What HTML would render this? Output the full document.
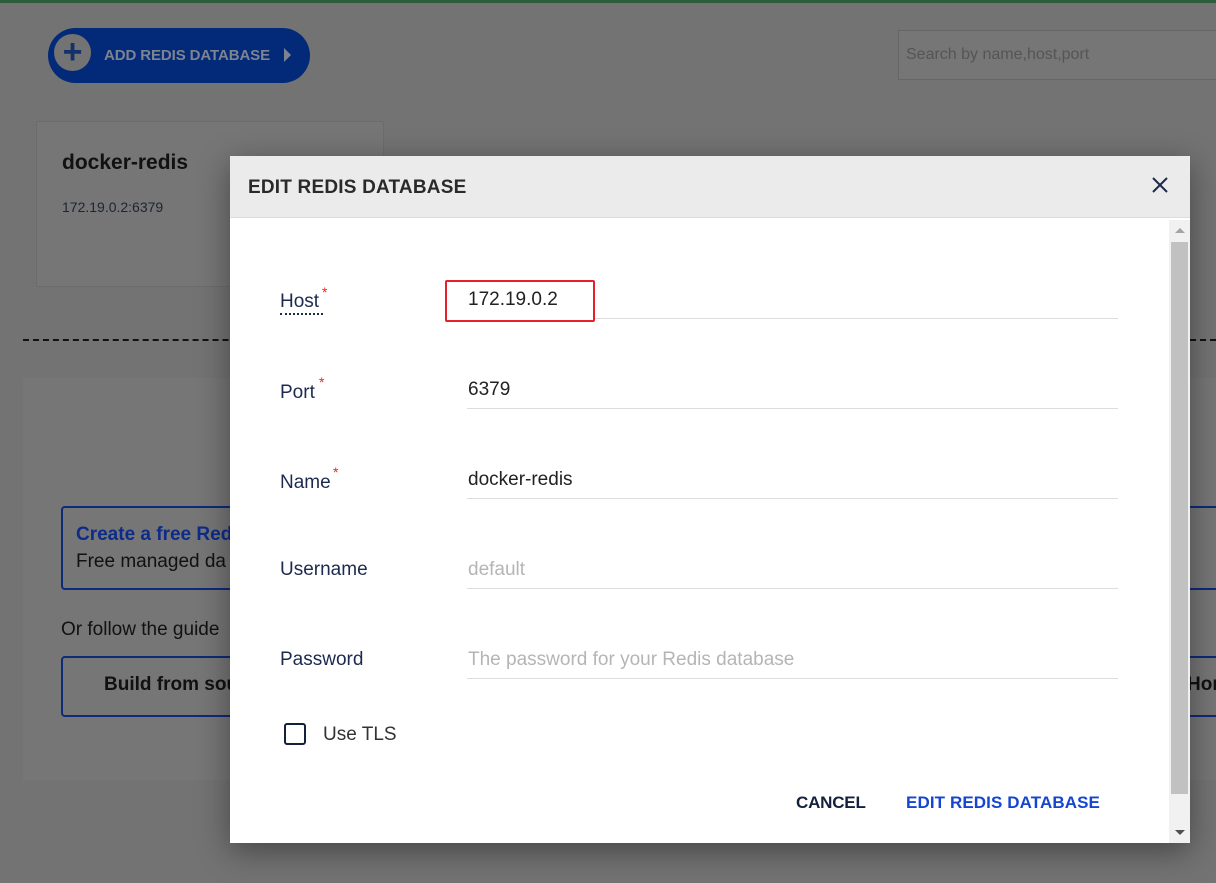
<!DOCTYPE html>
<html><head><style>
*{box-sizing:border-box;margin:0;padding:0}
body{width:1216px;height:883px;overflow:hidden;background:#737373;font-family:"Liberation Sans",sans-serif;position:relative}
.a{position:absolute}
</style></head><body>
<div class="a" style="left:0;top:0;width:1216px;height:3px;background:#2c5e3b"></div>
<div class="a" style="left:48px;top:28px;width:262px;height:55px;border-radius:28px;background:#032a78"></div>
<div class="a" style="left:54px;top:34px;width:37px;height:37px;border-radius:50%;background:#737373;color:#13316a;font-size:34px;font-weight:bold;line-height:36px;text-align:center">+</div>
<div class="a" style="left:104px;top:47px;color:#7d8391;font-size:15px;font-weight:bold;letter-spacing:-0.1px">ADD REDIS DATABASE</div>
<div class="a" style="left:284px;top:48px;width:0;height:0;border-left:7px solid #7d8391;border-top:7px solid transparent;border-bottom:7px solid transparent"></div>
<div class="a" style="left:898px;top:30px;width:330px;height:50px;border:1px solid #666;background:#767676;color:#555;font-size:16px;padding:15px 7px">Search by name,host,port</div>
<div class="a" style="left:36px;top:121px;width:348px;height:166px;background:#767676;border:1px solid #6c6c6c"></div>
<div class="a" style="left:62px;top:151px;font-size:21px;font-weight:bold;color:#111">docker-redis</div>
<div class="a" style="left:62px;top:199px;font-size:14px;color:#1d2434">172.19.0.2:6379</div>
<div class="a" style="left:23px;top:339px;width:1193px;border-top:2px dashed #111"></div>
<div class="a" style="left:23px;top:378px;width:1200px;height:402px;background:#767676"></div>
<div class="a" style="left:61px;top:506px;width:1170px;height:84px;border:2px solid #0c2b78;border-radius:4px"></div>
<div class="a" style="left:76px;top:524px;font-size:19px;font-weight:bold;color:#0d2c8a">Create a free Redis</div>
<div class="a" style="left:76px;top:551px;font-size:19px;color:#111">Free managed da</div>
<div class="a" style="left:61px;top:619px;font-size:19px;color:#111">Or follow the guide</div>
<div class="a" style="left:61px;top:656px;width:1170px;height:61px;border:2px solid #0c2b78;border-radius:4px"></div>
<div class="a" style="left:104px;top:674px;font-size:19px;font-weight:bold;color:#111">Build from sou</div>
<div class="a" style="left:1187px;top:674px;font-size:19px;font-weight:bold;color:#111">Hon</div>

<div class="a" style="left:230px;top:156px;width:960px;height:687px;background:#fff;box-shadow:0 8px 30px rgba(0,0,0,.4)">
 <div class="a" style="left:0;top:0;width:960px;height:62px;background:#ebebeb;border-bottom:1px solid #ddd"></div>
 <div class="a" style="left:18px;top:21px;font-size:19px;font-weight:bold;color:#2a2a2a;letter-spacing:0.2px">EDIT REDIS DATABASE</div>
 <svg class="a" style="left:922px;top:21px" width="16" height="16" viewBox="0 0 16 16"><path d="M1 1L15 15M15 1L1 15" stroke="#1d2a4a" stroke-width="2"/></svg>
 <div class="a" style="left:939px;top:64px;width:21px;height:623px;background:#f1f1f1"></div>
 <div class="a" style="left:941px;top:86px;width:17px;height:552px;background:#c1c1c1"></div>
 <div class="a" style="left:945px;top:72px;border-left:5px solid transparent;border-right:5px solid transparent;border-bottom:5px solid #a3a3a3"></div>
 <div class="a" style="left:945px;top:674px;border-left:5px solid transparent;border-right:5px solid transparent;border-top:5px solid #505050"></div>
</div>

<div class="a" style="left:280px;top:291px;font-size:19px;color:#1d2a50;border-bottom:2px dotted #1d2a50;line-height:22px;width:43px">Host</div>
<div class="a" style="left:322px;top:284px;color:#e22;font-size:14px">*</div>
<div class="a" style="left:445px;top:280px;width:150px;height:42px;border:2px solid #e8202a;border-radius:2px"></div>
<div class="a" style="left:468px;top:289px;font-size:19px;color:#222">172.19.0.2</div>
<div class="a" style="left:595px;top:318px;width:523px;height:1px;background:#ddd"></div>

<div class="a" style="left:280px;top:382px;font-size:19px;color:#1d2a50">Port</div>
<div class="a" style="left:319px;top:374px;color:#e22;font-size:14px">*</div>
<div class="a" style="left:468px;top:379px;font-size:19px;color:#222">6379</div>
<div class="a" style="left:467px;top:408px;width:651px;height:1px;background:#ddd"></div>

<div class="a" style="left:280px;top:472px;font-size:19px;color:#1d2a50">Name</div>
<div class="a" style="left:333px;top:464px;color:#e22;font-size:14px">*</div>
<div class="a" style="left:468px;top:469px;font-size:19px;color:#222">docker-redis</div>
<div class="a" style="left:467px;top:498px;width:651px;height:1px;background:#ddd"></div>

<div class="a" style="left:280px;top:559px;font-size:19px;color:#1d2a50">Username</div>
<div class="a" style="left:468px;top:559px;font-size:19px;color:#b5b5b5">default</div>
<div class="a" style="left:467px;top:588px;width:651px;height:1px;background:#ddd"></div>

<div class="a" style="left:280px;top:649px;font-size:19px;color:#1d2a50">Password</div>
<div class="a" style="left:468px;top:649px;font-size:19px;color:#b5b5b5">The password for your Redis database</div>
<div class="a" style="left:467px;top:678px;width:651px;height:1px;background:#ddd"></div>

<div class="a" style="left:284px;top:723px;width:22px;height:22px;border:2.5px solid #13213f;border-radius:3px"></div>
<div class="a" style="left:323px;top:724px;font-size:19px;color:#333">Use TLS</div>
<div class="a" style="left:796px;top:793px;font-size:17px;font-weight:bold;color:#13213f;letter-spacing:-0.2px">CANCEL</div>
<div class="a" style="left:906px;top:793px;font-size:17px;font-weight:bold;color:#1546d0;letter-spacing:0.1px">EDIT REDIS DATABASE</div>
</body></html>
